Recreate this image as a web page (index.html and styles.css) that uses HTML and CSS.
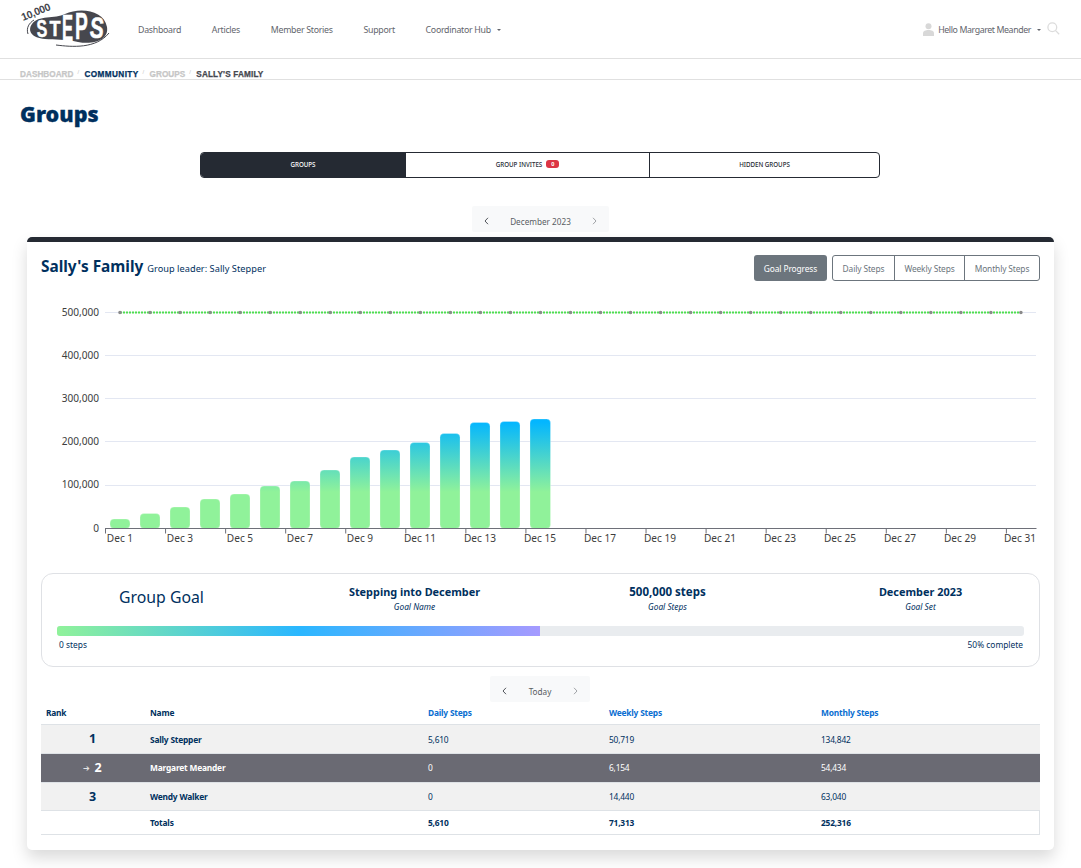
FILE: index.html
```html
<!DOCTYPE html>
<html lang="en">
<head>
<meta charset="utf-8">
<title>Groups</title>
<link rel="stylesheet" href="styles.css">
</head>
<body>
<header class="topbar">
  <a class="logo" href="#">
    <svg width="92" height="50" viewBox="0 0 92 50">
      <text class="logo-count" transform="translate(3 21) rotate(-22)">10,000</text>
      <path class="logo-ring" d="M8 34 C6 28 9 23 14 20"/>
      <path class="logo-ring" d="M36 45 C52 47 76 49 89 33"/>
      <path class="logo-body" d="M12 24 C18 15 35 19 45 14 C60 7 84 10 87 27 C89 40 74 45 58 42 C45 39 35 40 25 39 C12 38 7 31 12 24 Z"/>
      <text class="logo-word" transform="translate(17 37) rotate(-3) scale(.66 1)" font-size="24">S</text>
      <text class="logo-word" transform="translate(29.5 36) scale(.82 1)" font-size="22">T</text>
      <text class="logo-word" transform="translate(42 41) scale(.45 1)" font-size="37">E</text>
      <text class="logo-word" transform="translate(55 39) scale(.52 1)" font-size="37">P</text>
      <text class="logo-word" transform="translate(69 37) rotate(6) scale(.72 1)" font-size="29">S</text>
    </svg>
  </a>
  <nav class="mainnav">
    <a href="#">Dashboard</a>
    <a href="#">Articles</a>
    <a href="#">Member Stories</a>
    <a href="#">Support</a>
    <a href="#" class="caret">Coordinator Hub</a>
  </nav>
  <div class="userbox">
    <svg class="usericon" width="11" height="13" viewBox="0 0 11 13"><circle cx="5.5" cy="3.2" r="3"/><path d="M0 13 V10.5 C0 7.8 2.5 7 5.5 7 S11 7.8 11 10.5 V13 Z"/></svg>
    <a href="#" class="caret">Hello Margaret Meander</a>
    <svg class="searchicon" width="13" height="13" viewBox="0 0 13 13"><circle cx="5.3" cy="5.3" r="4.4"/><path d="M8.6 8.6 L12.2 12.2"/></svg>
  </div>
</header>

<div class="crumbs">
  <a class="crumb-muted" href="#">Dashboard</a><span class="sep">/</span>
  <a class="crumb-strong" href="#">Community</a><span class="sep">/</span>
  <a class="crumb-muted" href="#">Groups</a><span class="sep">/</span>
  <span class="crumb-current">Sally's Family</span>
</div>

<h1 class="pagetitle">Groups</h1>

<div class="tabs">
  <a class="tab tab-groups tab-active" href="#">Groups</a>
  <a class="tab tab-invites" href="#">Group Invites <span class="badge">0</span></a>
  <a class="tab tab-hidden" href="#">Hidden Groups</a>
</div>

<div class="picker picker-month">
  <span class="pick-btn"><svg width="5" height="8" viewBox="0 0 5 8"><path class="chev-dark" d="M4 .8 L1 4 L4 7.2"/></svg></span>
  <span class="pick-label">December 2023</span>
  <span class="pick-btn"><svg width="5" height="8" viewBox="0 0 5 8"><path class="chev-light" d="M1 .8 L4 4 L1 7.2"/></svg></span>
</div>

<main class="card">
  <div class="card-head">
    <div class="card-title"><h2>Sally's Family</h2><span>Group leader: Sally Stepper</span></div>
    <div class="card-actions">
      <a class="btn-solid" href="#">Goal Progress</a>
      <div class="btn-group">
        <a class="btn-daily" href="#">Daily Steps</a>
        <a class="btn-weekly" href="#">Weekly Steps</a>
        <a class="btn-monthly" href="#">Monthly Steps</a>
      </div>
    </div>
  </div>

  <svg class="chart" width="999" height="268" viewBox="41 295 999 268">
    <defs>
      <linearGradient id="barfill" gradientUnits="userSpaceOnUse" x1="0" y1="422" x2="0" y2="492">
        <stop offset="0" stop-color="#03b6ff"/>
        <stop offset="1" stop-color="#90f29a"/>
      </linearGradient>
    </defs>
    <g class="grid">
      <line x1="105" x2="1036" y1="312.5" y2="312.5"/>
      <line x1="105" x2="1036" y1="355.5" y2="355.5"/>
      <line x1="105" x2="1036" y1="398.5" y2="398.5"/>
      <line x1="105" x2="1036" y1="441.5" y2="441.5"/>
      <line x1="105" x2="1036" y1="485.5" y2="485.5"/>
    </g>
    <g class="ylabels">
      <text x="99" y="315.5">500,000</text>
      <text x="99" y="358.5">400,000</text>
      <text x="99" y="401.5">300,000</text>
      <text x="99" y="445">200,000</text>
      <text x="99" y="488">100,000</text>
      <text x="99" y="531.5">0</text>
    </g>
    <g fill="url(#barfill)" class="bars">
      <rect x="110" y="519" width="20" height="9.5" rx="4"/>
      <rect x="140" y="513.5" width="20" height="15" rx="4"/>
      <rect x="170" y="507" width="20" height="21.5" rx="4"/>
      <rect x="200" y="499" width="20" height="29.5" rx="4"/>
      <rect x="230" y="494" width="20" height="34.5" rx="4"/>
      <rect x="260" y="486" width="20" height="42.5" rx="4"/>
      <rect x="290" y="481" width="20" height="47.5" rx="4"/>
      <rect x="320" y="470" width="20" height="58.5" rx="4"/>
      <rect x="350" y="457" width="20" height="71.5" rx="4"/>
      <rect x="380" y="450" width="20" height="78.5" rx="4"/>
      <rect x="410" y="442.5" width="20" height="86" rx="4"/>
      <rect x="440" y="433.5" width="20" height="95" rx="4"/>
      <rect x="470" y="422.5" width="20" height="106" rx="4"/>
      <rect x="500" y="421.5" width="20" height="107" rx="4"/>
      <rect x="530" y="419" width="20.5" height="109.5" rx="4"/>
    </g>
    <line class="axis" x1="105" x2="1036.5" y1="528.5" y2="528.5"/>
    <line class="ticks" x1="105" x2="1037" y1="531" y2="531"/>
    <line class="goalline" x1="120" x2="1021" y1="312.5" y2="312.5"/>
    <line class="goaldots" x1="120" x2="1022" y1="312.5" y2="312.5"/>
    <g class="xlabels">
      <text x="120" y="542">Dec 1</text>
      <text x="180" y="542">Dec 3</text>
      <text x="240" y="542">Dec 5</text>
      <text x="300" y="542">Dec 7</text>
      <text x="360" y="542">Dec 9</text>
      <text x="420" y="542">Dec 11</text>
      <text x="480" y="542">Dec 13</text>
      <text x="540" y="542">Dec 15</text>
      <text x="600" y="542">Dec 17</text>
      <text x="660" y="542">Dec 19</text>
      <text x="720" y="542">Dec 21</text>
      <text x="780" y="542">Dec 23</text>
      <text x="840" y="542">Dec 25</text>
      <text x="900" y="542">Dec 27</text>
      <text x="960" y="542">Dec 29</text>
      <text x="1020" y="542">Dec 31</text>
    </g>
  </svg>

  <section class="goal">
    <div class="goal-cols">
      <div class="goal-heading">Group Goal</div>
      <div class="goal-item"><strong>Stepping into December</strong><em>Goal Name</em></div>
      <div class="goal-item goal-steps"><strong>500,000 steps</strong><em>Goal Steps</em></div>
      <div class="goal-item"><strong>December 2023</strong><em>Goal Set</em></div>
    </div>
    <div class="progress"><div class="progress-fill"></div></div>
    <div class="progress-labels"><span>0 steps</span><span>50% complete</span></div>
  </section>

  <div class="picker picker-day">
    <span class="pick-btn"><svg width="5" height="8" viewBox="0 0 5 8"><path class="chev-dark" d="M4 .8 L1 4 L4 7.2"/></svg></span>
    <span class="pick-label">Today</span>
    <span class="pick-btn"><svg width="5" height="8" viewBox="0 0 5 8"><path class="chev-light" d="M1 .8 L4 4 L1 7.2"/></svg></span>
  </div>

  <table class="rank">
    <colgroup>
      <col class="c-rank"><col class="c-name"><col class="c-daily"><col class="c-weekly"><col class="c-monthly">
    </colgroup>
    <thead>
      <tr><th>Rank</th><th>Name</th><th class="link">Daily Steps</th><th class="link">Weekly Steps</th><th class="link">Monthly Steps</th></tr>
    </thead>
    <tbody>
      <tr class="row"><td class="pos">1</td><td class="who">Sally Stepper</td><td>5,610</td><td>50,719</td><td>134,842</td></tr>
      <tr class="row me"><td class="pos"><span class="arrow">➔</span> 2</td><td class="who">Margaret Meander</td><td>0</td><td>6,154</td><td>54,434</td></tr>
      <tr class="row row-last"><td class="pos">3</td><td class="who">Wendy Walker</td><td>0</td><td>14,440</td><td>63,040</td></tr>
      <tr class="totals"><td></td><td>Totals</td><td>5,610</td><td>71,313</td><td>252,316</td></tr>
    </tbody>
  </table>
</main>
</body>
</html>
```
FILE: styles.css
```css
* { box-sizing: border-box; }
html, body { margin: 0; padding: 0; background: #fff; }
body {
  height: 868px;
  overflow: hidden;
  font-family: "Noto Sans", "Open Sans", sans-serif;
  color: #00305e;
}
a { color: inherit; text-decoration: none; }

.topbar {
  height: 59px;
  border-bottom: 1px solid #e0e0e0;
  display: flex;
  align-items: center;
  padding: 2px 21px 0 20px;
}
.logo { width: 118px; height: 50px; margin-top: -2px; align-self: flex-start; display: block; }
.logo svg { display: block; }
.logo-count { font: 700 10.5px "Liberation Sans", sans-serif; fill: #46474e; letter-spacing: -.3px; }
.logo-ring { fill: none; stroke: #46474e; stroke-width: 1; }
.logo-body { fill: #46474e; }
.logo-word { font-family: "Liberation Sans", sans-serif; font-weight: 700; fill: #fff; stroke: #fff; stroke-width: .5; }

.mainnav { display: flex; gap: 30.8px; font-size: 8.8px; color: #62656c; letter-spacing: -.28px; }
.caret::after {
  content: "";
  display: inline-block;
  margin-left: 6px;
  vertical-align: 2px;
  border-top: 2.5px solid #62656c;
  border-left: 2.5px solid transparent;
  border-right: 2.5px solid transparent;
}
.userbox { margin-left: auto; display: flex; align-items: center; font-size: 8.8px; color: #62656c; letter-spacing: -.4px; }
.usericon { fill: #d8d8d8; margin-right: 4px; margin-top: -2px; }
.searchicon { margin-left: 6px; margin-top: -3px; fill: none; stroke: #dcdcdc; stroke-width: 1.3; }

.crumbs {
  height: 21px;
  border-bottom: 1px solid #e0e0e0;
  padding: 11px 0 0 20px;
  display: flex;
  font: 700 8.2px/9px "Liberation Sans", sans-serif;
  text-transform: uppercase;
  -webkit-text-stroke: .25px currentColor;
}
.sep { color: #c8c8c8; font-weight: 400; font-size: 6px; margin: -2px 4px 0; width: 3px; -webkit-text-stroke: 0; }
.crumb-muted { color: #c6c6c6; letter-spacing: .03px; }
.crumb-strong { color: #00305e; letter-spacing: .4px; }
.crumb-current { color: #45474f; letter-spacing: .15px; }

.pagetitle {
  margin: 0;
  padding: 20px 0 0 20px;
  font-size: 21.5px;
  line-height: 28px;
  font-weight: 900;
  -webkit-text-stroke: .3px #00305e;
  color: #00305e;
}

.tabs {
  width: 680px;
  height: 26px;
  margin: 24px 0 0 200px;
  border: 1px solid #252a33;
  border-radius: 4px;
  display: flex;
  overflow: hidden;
}
.tab {
  display: flex;
  align-items: center;
  justify-content: center;
  gap: 4px;
  padding-bottom: 2px;
  font-size: 6.2px;
  font-weight: 500;
  text-transform: uppercase;
  color: #252a33;
}
.tab-groups { width: 204px; }
.tab-invites { width: 245px; border-left: 1px solid #252a33; border-right: 1px solid #252a33; }
.tab-hidden { flex: 1; }
.tab-active { background: #252a33; color: #fff; }
.badge {
  background: #dc3545;
  color: #fff;
  border-radius: 3px;
  width: 13px;
  height: 8px;
  line-height: 8px;
  font-size: 5.5px;
  font-weight: 700;
  text-align: center;
}

.picker {
  display: flex;
  align-items: center;
  height: 26px;
  padding-top: 4px;
  background: #f8f9fa;
  font-size: 8.2px;
  color: #595d63;
  border-radius: 2px;
}
.picker-month { width: 137px; margin: 28px 0 0 472px; }
.pick-label { flex: 1; text-align: center; }
.pick-btn { width: 29px; display: flex; justify-content: center; }
.chev-dark, .chev-light { fill: none; stroke-width: 1; }
.chev-dark { stroke: #52565c; }
.chev-light { stroke: #a0a3a7; }

.card {
  width: 1027px;
  height: 613px;
  margin: 5px 0 0 27px;
  padding: 0 14px;
  background: #fff;
  border-top: 5px solid #252a33;
  border-radius: 5px;
  box-shadow: 0 8px 16px rgba(0, 0, 0, .15);
}
.card-head {
  display: flex;
  justify-content: space-between;
  align-items: flex-start;
  padding-top: 13px;
  height: 53px;
}
.card-title { display: flex; align-items: baseline; height: 26px; padding-top: 2px; }
.card-title h2 { margin: 0; font-size: 15.4px; line-height: 20px; font-weight: 700; color: #00305e; }
.card-title span { margin-left: 4px; font-size: 9.2px; letter-spacing: .04px; color: #00305e; }
.card-actions { display: flex; gap: 5px; height: 26px; font-size: 8.4px; letter-spacing: -.12px; }
.btn-solid {
  width: 73px;
  display: flex;
  align-items: center;
  justify-content: center;
  background: #6c757d;
  color: #fff;
  border-radius: 3px;
}
.btn-group {
  display: flex;
  width: 208px;
  border: 1px solid #6c757d;
  border-radius: 3px;
  color: #6c757d;
}
.btn-group a { display: flex; align-items: center; justify-content: center; }
.btn-daily { width: 62px; border-right: 1px solid #6c757d; }
.btn-weekly { width: 70px; border-right: 1px solid #6c757d; }
.btn-monthly { flex: 1; }

.chart { display: block; }
.grid line { stroke: #e3e7f2; stroke-width: 1; }
.ylabels text { font-size: 10.1px; fill: #3d3d3d; text-anchor: end; }
.xlabels text { font-size: 10.1px; fill: #3d3d3d; text-anchor: middle; }
.bars rect { stroke: rgba(255, 255, 255, .25); stroke-width: 1; }
.axis { stroke: #6e7079; stroke-width: 1; }
.ticks { stroke: #6e7079; stroke-width: 5; stroke-dasharray: 1 59.06; }
.goalline { stroke: #4fdf4f; stroke-width: 2; stroke-dasharray: 2 1; }
.goaldots { stroke: #8a8a8a; stroke-width: 3.6; stroke-linecap: round; stroke-dasharray: 0 30.03; }

.goal {
  height: 94px;
  margin-top: 10px;
  padding: 9px 15px 0;
  border: 1px solid #dfe1e5;
  border-radius: 12px;
}
.goal-cols {
  display: grid;
  grid-template-columns: repeat(4, 253px);
  margin: 0 -22px;
  height: 43px;
  text-align: center;
}
.goal-heading { font-size: 15.8px; line-height: 28px; color: #00305e; }
.goal-item strong { display: block; font-size: 10.9px; line-height: 18px; font-weight: 700; }
.goal-steps strong { font-size: 11.5px; }
.goal-item em { display: block; font-size: 8.3px; line-height: 12px; }
.progress { height: 10px; background: #e9ecef; border-radius: 3px; overflow: hidden; }
.progress-fill {
  width: 483px;
  height: 100%;
  background: linear-gradient(90deg, #90f29a 0%, #2ab7ff 50%, #a59aff 100%);
}
.progress-labels {
  display: flex;
  justify-content: space-between;
  font-size: 8.4px;
  line-height: 12px;
  margin-top: 3px;
  padding: 0 1px 0 2px;
}

.picker-day { width: 100px; margin: 9px 0 0 449px; }

.rank {
  width: 999px;
  border-collapse: collapse;
  table-layout: fixed;
  font-size: 8.4px;
  letter-spacing: -.2px;
  color: #00305e;
}
.c-rank { width: 109px; }
.c-name { width: 278px; }
.c-daily { width: 181px; }
.c-weekly { width: 212px; }
.rank th {
  height: 22px;
  padding: 0;
  text-align: left;
  font-weight: 700;
  vertical-align: middle;
  border-bottom: 1px solid #dee2e6;
}
.rank th:first-child { padding-left: 5px; }
.rank th.link { color: #0a6ed1; }
.rank td { padding: 1px 0 0; vertical-align: middle; }
.row td { height: 29px; background: #f1f1f1; border-bottom: 1px solid #dee2e6; }
.row-last td { height: 28px; }
.row.me td { background: #6a6a73; color: #fff; padding-top: 0; }
.rank .pos { text-align: center; font-size: 12.5px; font-weight: 700; letter-spacing: 0; padding: 0 6px 0 0; }
.arrow { font-size: 8px; font-weight: 400; color: #e4e4e4; vertical-align: 1px; margin-right: 1px; }
.who { font-weight: 700; }
.totals td { height: 24px; font-weight: 700; border-bottom: 1px solid #dee2e6; }
.totals td:last-child { border-right: 1px solid #dee2e6; }
```
